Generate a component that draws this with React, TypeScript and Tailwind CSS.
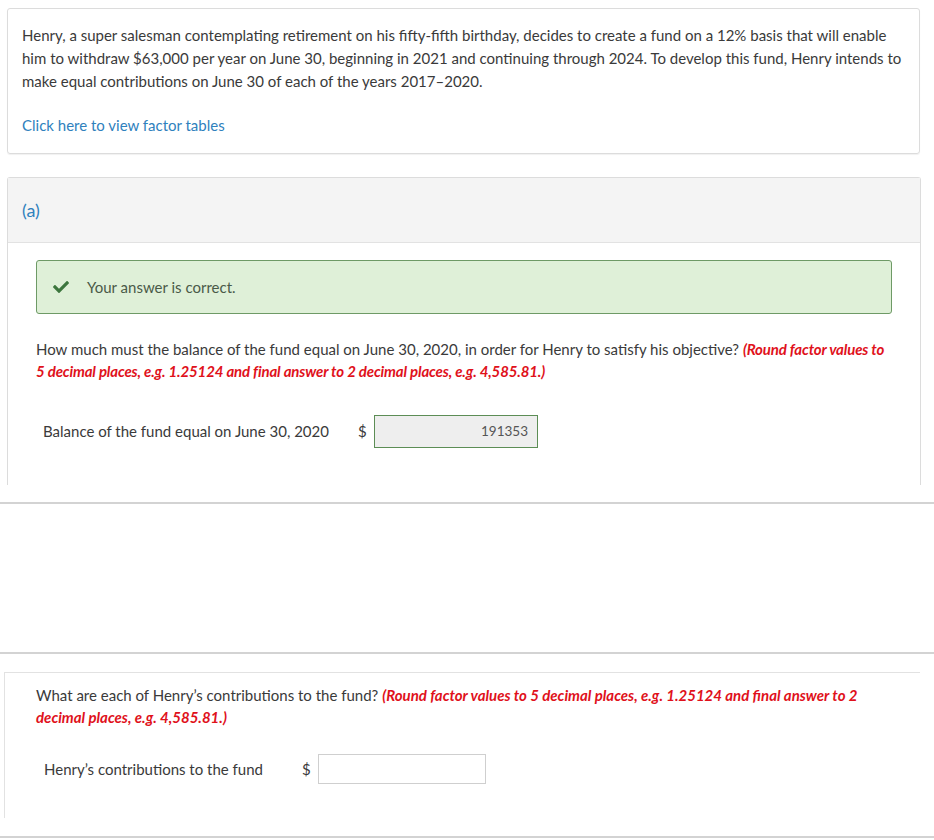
const RED_NOTE =
  "(Round factor values to 5 decimal places, e.g. 1.25124 and final answer to 2 decimal places, e.g. 4,585.81.)";

const CheckMark = () => (
  <svg viewBox="0 0 512 512" className="w-[16px] h-[16px] fill-[#3c763d]">
    <path d="M173.898 439.404l-166.4-166.4c-9.997-9.997-9.997-26.206 0-36.204l36.203-36.204c9.997-9.998 26.207-9.998 36.204 0L192 312.69 432.095 72.596c9.997-9.997 26.207-9.997 36.204 0l36.203 36.204c9.997 9.997 9.997 26.206 0 36.204l-294.4 294.401c-9.998 9.997-26.207 9.997-36.204-.001z" />
  </svg>
);

const App = () => {
  return (
    <div className="w-[934px] h-[840px] bg-white overflow-hidden font-['Lato','Noto_Sans',sans-serif] text-[#333]">
      {/* Problem statement */}
      <div className="mt-2 ml-[7px] w-[913px] border border-[#dcdcdc] rounded-[3px] shadow-[0_1px_1px_rgba(0,0,0,0.06)] px-[14px] pt-[15px] pb-[16px]">
        <p className="text-[15px] leading-[23px] text-[#3a3a3a]">
          Henry, a super salesman contemplating retirement on his fifty-fifth birthday, decides to create a fund on a 12% basis that will enable
          him to withdraw $63,000 per year on June 30, beginning in 2021 and continuing through 2024. To develop this fund, Henry intends to
          make equal contributions on June 30 of each of the years 2017–2020.
        </p>
        <a className="block mt-[21px] text-[15px] leading-[23px] text-[#2f81bd]">Click here to view factor tables</a>
      </div>

      {/* Part (a) */}
      <div className="mt-[23px] ml-[7px] w-[914px] h-[308px] border-x border-t border-[#dcdcdc] rounded-t-[3px]">
        <div className="h-[65px] bg-[#f4f4f4] border-b border-[#e2e2e2] flex items-center px-[14px]">
          <span className="text-[18px] text-[#2f81bd]">(a)</span>
        </div>
        <div className="px-[28px] pt-[17px]">
          <div className="h-[54px] bg-[#dff0d8] border border-[#6e9a66] rounded-[3px] flex items-center pl-[16px]">
            <CheckMark />
            <span className="ml-[18px] text-[15px] text-[#4a5a48]">Your answer is correct.</span>
          </div>
          <p className="mt-[24px] text-[15px] leading-[22px] text-[#3a3a3a]">
            How much must the balance of the fund equal on June 30, 2020, in order for Henry to satisfy his objective?{" "}
            <span className="text-[#e0111b] italic font-bold tracking-[-0.01em]">{RED_NOTE}</span>
          </p>
          <div className="mt-[33px] flex items-center pl-[7px]">
            <span className="w-[315px] text-[15px] text-[#3a3a3a]">Balance of the fund equal on June 30, 2020</span>
            <span className="w-[16px] text-[15px] text-[#3a3a3a]">$</span>
            <div className="w-[164px] h-[33px] bg-[#eeeeee] border border-[#5c8d55] flex items-center justify-end pr-[9px] text-[13.5px] text-[#555]">
              191353
            </div>
          </div>
        </div>
      </div>

      {/* Page break */}
      <div className="mt-[17px] h-[2px] bg-[#d3d3d3]" />
      <div className="h-[148px]" />
      <div className="h-[2px] bg-[#d3d3d3]" />

      {/* Part (b) */}
      <div className="mt-[18px] ml-[4px] w-[916px] h-[146px] border-l border-t border-[#e2e2e2]">
        <p className="pl-[31px] pt-[11px] pr-[60px] text-[15px] leading-[22px] text-[#3a3a3a]">
          What are each of Henry’s contributions to the fund?{" "}
          <span className="text-[#e0111b] italic font-bold">{RED_NOTE}</span>
        </p>
        <div className="mt-[26px] flex items-center pl-[39px]">
          <span className="w-[258px] text-[15px] text-[#3a3a3a]">Henry’s contributions to the fund</span>
          <span className="w-[16px] text-[15px] text-[#3a3a3a]">$</span>
          <div className="w-[168px] h-[30px] bg-white border border-[#cfcfcf]" />
        </div>
      </div>
      <div className="mt-[18px] h-[2px] bg-[#d3d3d3]" />
    </div>
  );
};

export default App;
